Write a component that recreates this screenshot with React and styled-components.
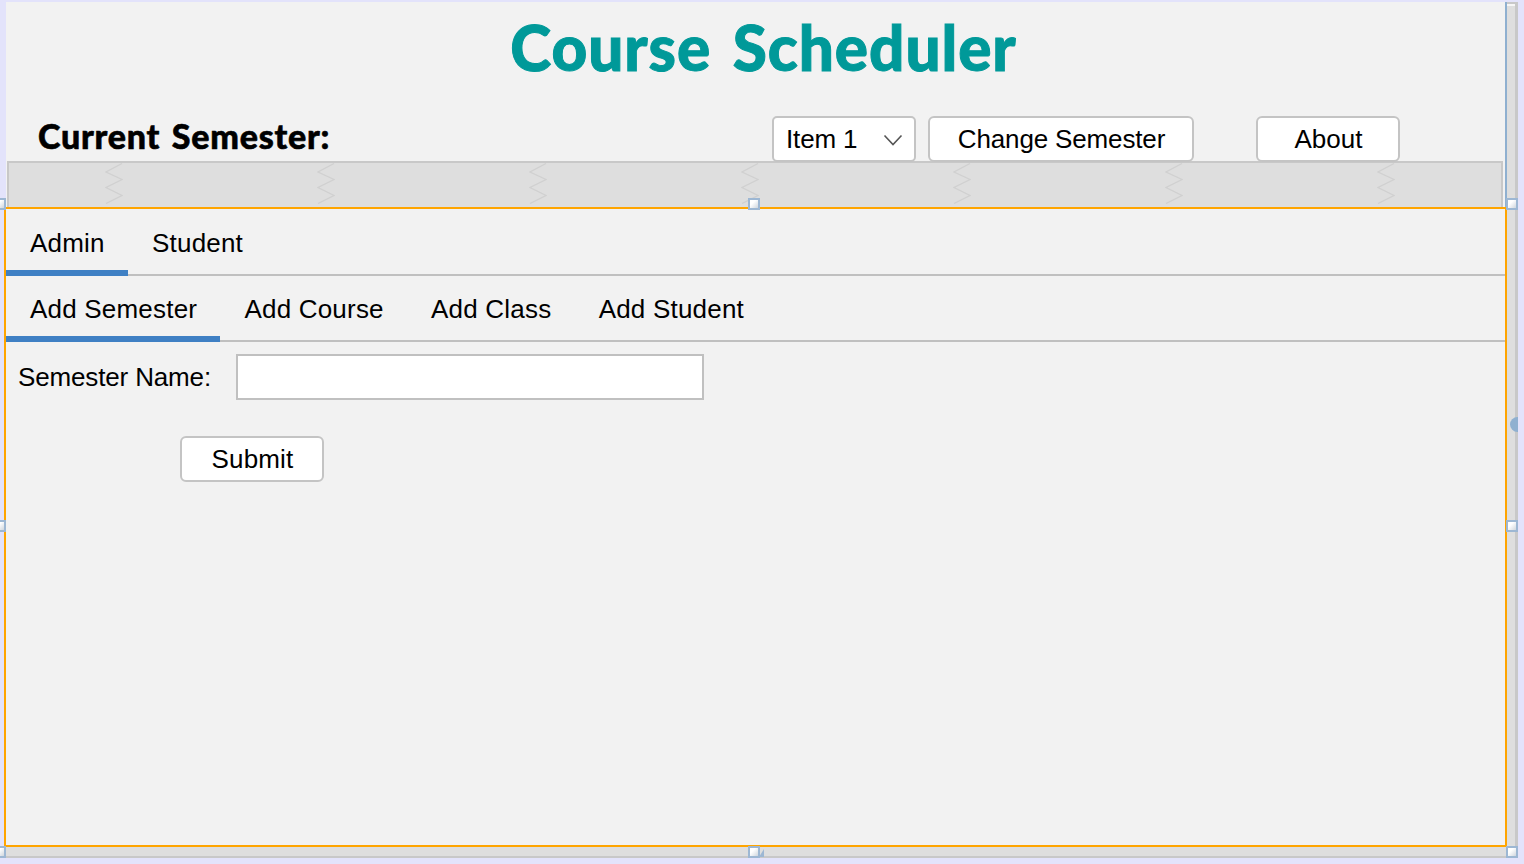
import React from "react";
import styled, { createGlobalStyle } from "styled-components";

const Global = createGlobalStyle`
  html, body { margin: 0; padding: 0; background: #e3e3fb; }
  body { font-family: "Liberation Sans", Arial, sans-serif; color: #000; }
  * { box-sizing: border-box; }
`;

const Page = styled.div`
  width: 1524px;
  height: 864px;
  overflow: hidden;
  padding: 2px 0 0 6px;
  background: #e3e3fb;
  position: relative;
`;

const Frame = styled.div`
  width: 1512px;
  height: 856px;
  background: #dedede;
  border-right: 3px solid #c8c8c8;
  border-bottom: 2px solid #c8c8c8;
  border-top: 2px solid #c8c8c8;
  box-shadow: inset 0 2px 0 #f6f6f6;
  display: flex;
  flex-direction: column;
  align-items: flex-start;
`;

const Header = styled.header`
  width: 1501px;
  height: 159px;
  margin-top: -2px;
  background: #f2f2f2;
  border-right: 2px solid #8fb0d0;
  display: flex;
  flex-direction: column;
  position: relative;
  z-index: 1;
`;

const Title = styled.h1`
  margin: 0;
  height: 114px;
  padding: 7px 0 0 16px;
  font-family: "Comic Sans MS", "Lato", sans-serif;
  font-size: 62px;
  line-height: 76px;
  font-weight: 900;
  letter-spacing: 0.95px;
  word-spacing: 6px;
  text-align: center;
  color: #009999;
  -webkit-text-stroke: 1px #009999;
`;

const Toolbar = styled.div`
  display: flex;
  align-items: flex-start;
  height: 45px;
  padding-left: 32px;
`;

const SemesterLabel = styled.div`
  width: 734px;
  font-family: "Comic Sans MS", "Lato", sans-serif;
  font-size: 34px;
  line-height: 40px;
  font-weight: 900;
  letter-spacing: 0.75px;
  word-spacing: 3px;
  -webkit-text-stroke: 0.6px #000;
`;

const Select = styled.div`
  width: 144px;
  height: 46px;
  background: #fff;
  border: 2px solid #c4c4c4;
  border-radius: 5px;
  display: flex;
  align-items: center;
  justify-content: space-between;
  padding: 1px 11px 0 12px;
  font-size: 26px;
  letter-spacing: -0.15px;
  margin-right: 12px;
`;

const Button = styled.button`
  height: 46px;
  width: ${(p) => p.$width}px;
  margin-left: ${(p) => p.$offset || 0}px;
  padding: 1px 0 0 1px;
  background: #fff;
  border: 2px solid #c4c4c4;
  border-radius: 6px;
  font-family: "Liberation Sans", Arial, sans-serif;
  font-size: 26px;
  letter-spacing: ${(p) => p.$spacing || 0}px;
  color: #000;
`;

const SplitterWrap = styled.div`
  width: 1501px;
  background: #f2f2f2;
  border-right: 2px solid #8fb0d0;
`;

const Splitter = styled.div`
  width: 1496px;
  height: 46px;
  margin-left: 1px;
  background: #dedede;
  border: 2px solid #c8c8c8;
  border-bottom: 0;
  display: flex;
  gap: 194px;
  padding-left: 96px;
`;

const Main = styled.main`
  width: 1503px;
  height: 640px;
  margin-left: -2px;
  background: #f2f2f2;
  border: 2px solid #ffa500;
  flex: none;
`;

const TabBar = styled.div`
  display: flex;
  height: ${(p) => p.$height}px;
  line-height: ${(p) => p.$line}px;
  border-bottom: 2px solid #c0c0c0;
`;

const Tab = styled.div`
  height: calc(100% + 2px);
  padding: 0 23.3px 0 24px;
  font-size: 26px;
  letter-spacing: 0.2px;
  border-bottom: 6px solid ${(p) => (p.$active ? "#3f80c4" : "transparent")};
`;

const Form = styled.div`
  padding: 12px 0 0 12px;
  display: flex;
  flex-direction: column;
`;

const Field = styled.div`
  display: flex;
  align-items: center;
  height: 46px;
`;

const FieldLabel = styled.label`
  width: 218px;
  font-size: 26px;
  letter-spacing: -0.15px;
`;

const TextInput = styled.input`
  width: 468px;
  height: 46px;
  background: #fff;
  border: 2px solid #c0c0c0;
  border-radius: 0;
  outline: 0;
`;

const SubmitRow = styled.div`
  margin: 36px 0 0 162px;
`;

const Handle = styled.span`
  position: absolute;
  left: ${(p) => p.$x}px;
  top: ${(p) => p.$y}px;
  width: 12px;
  height: 12px;
  border: 2px solid #9db7d3;
  background: linear-gradient(135deg, #ffffff 35%, #cfd6dd 100%);
  z-index: 2;
`;

const Corner = styled.span`
  position: absolute;
  left: 759px;
  top: 849px;
  width: 0;
  height: 0;
  border-left: 5px solid transparent;
  border-bottom: 8px solid #9db7d3;
  z-index: 2;
`;

const EdgeKnob = styled.span`
  position: absolute;
  left: 1510px;
  top: 417px;
  width: 8px;
  height: 15px;
  background: #8fb0d0;
  border-radius: 8px 0 0 8px;
  z-index: 2;
`;

const Zigzag = () => (
  <svg width="18" height="41" viewBox="0 0 18 41" fill="none" style={{ flex: "none" }}>
    <path d="M17 0.5 1 9 17 16.5 1 24.5 17 32.5 1 40.5" stroke="#d0d0d0" strokeWidth="1.3" />
  </svg>
);

const Chevron = () => (
  <svg width="20" height="12" viewBox="0 0 20 12" fill="none">
    <path d="M1.5 1.5 10 10.5 18.5 1.5" stroke="#555" strokeWidth="1.6" />
  </svg>
);

const handles = [
  [-6, 198], [748, 198], [1506, 198],
  [-6, 520], [1506, 520],
  [-6, 846], [748, 846], [1506, 846],
];

export default function App() {
  return (
    <>
      <Global />
      <Page>
        <Frame>
          <Header>
            <Title>Course Scheduler</Title>
            <Toolbar>
              <SemesterLabel>Current Semester:</SemesterLabel>
              <Select>
                <span>Item 1</span>
                <Chevron />
              </Select>
              <Button $width={266} $spacing={-0.15}>Change Semester</Button>
              <Button $width={144} $offset={62}>About</Button>
            </Toolbar>
          </Header>
          <SplitterWrap>
            <Splitter>
              {Array.from({ length: 7 }, (_, i) => (
                <Zigzag key={i} />
              ))}
            </Splitter>
          </SplitterWrap>
          <Main>
            <TabBar $height={67} $line={68}>
              <Tab $active>Admin</Tab>
              <Tab>Student</Tab>
            </TabBar>
            <TabBar $height={66} $line={66}>
              <Tab $active>Add Semester</Tab>
              <Tab>Add Course</Tab>
              <Tab>Add Class</Tab>
              <Tab>Add Student</Tab>
            </TabBar>
            <Form>
              <Field>
                <FieldLabel>Semester Name:</FieldLabel>
                <TextInput />
              </Field>
              <SubmitRow>
                <Button $width={144} $spacing={0.15}>Submit</Button>
              </SubmitRow>
            </Form>
          </Main>
        </Frame>
        {handles.map(([x, y]) => (
          <Handle key={`${x}-${y}`} $x={x} $y={y} />
        ))}
        <Corner />
        <EdgeKnob />
      </Page>
    </>
  );
}
